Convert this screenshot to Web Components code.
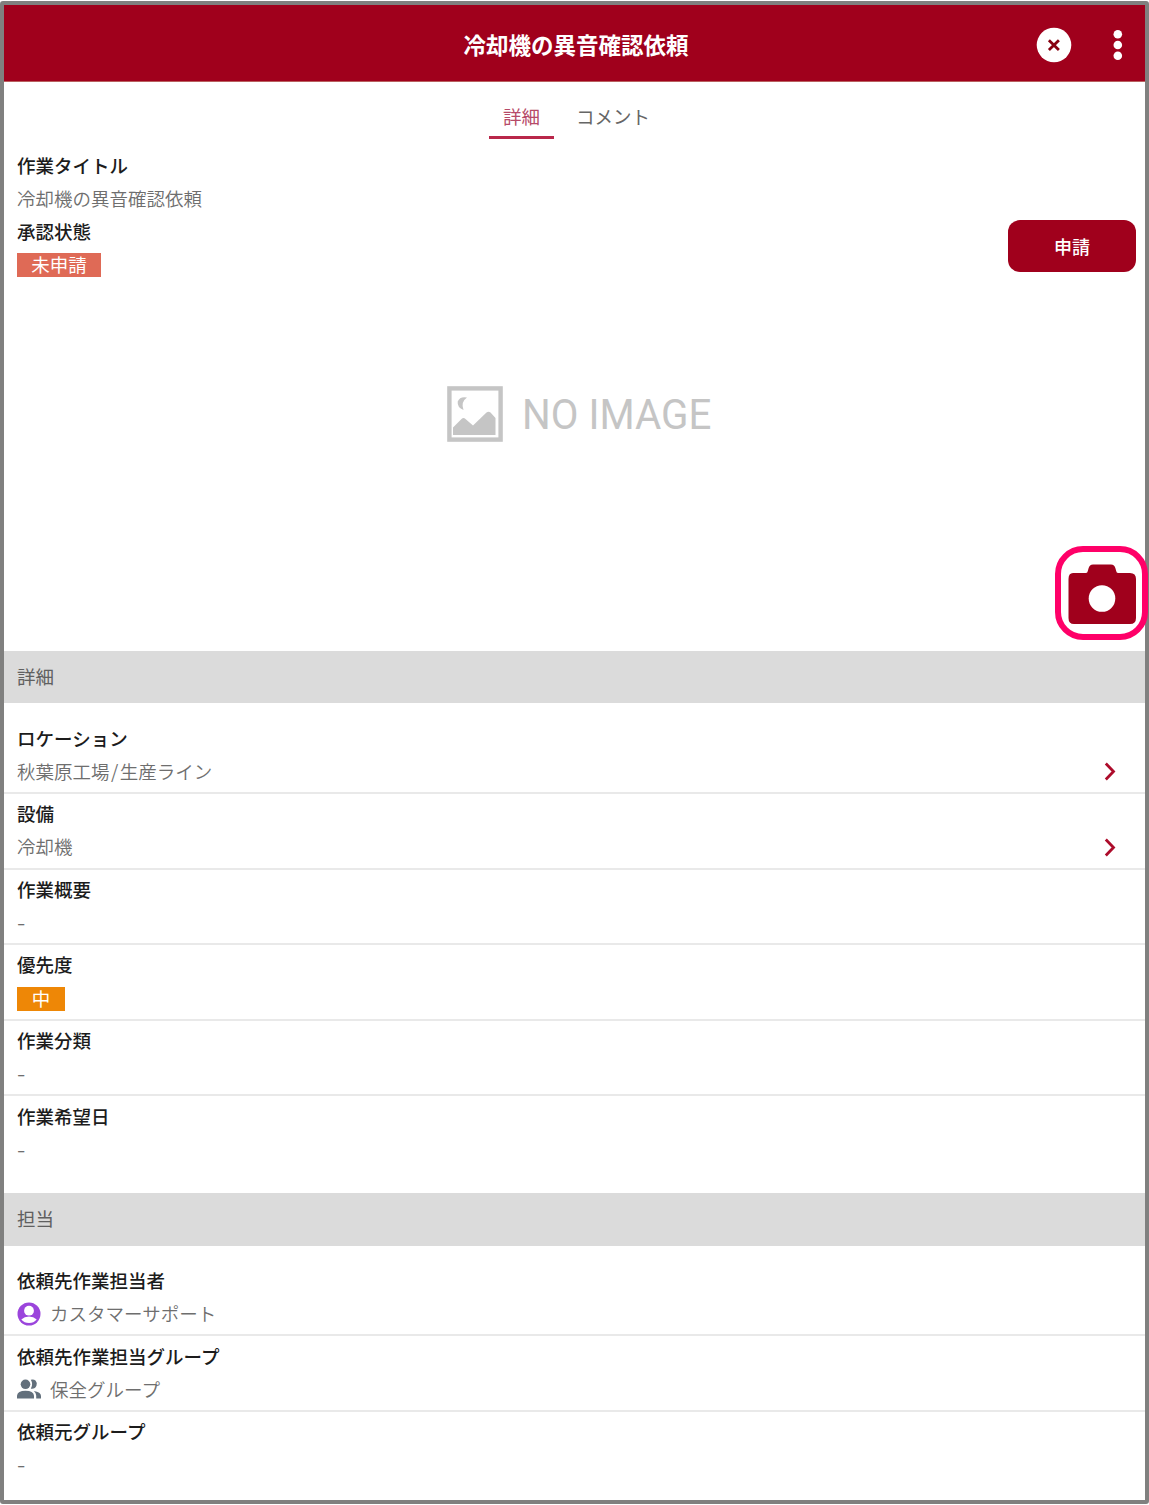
<!DOCTYPE html>
<html lang="ja">
<head>
<meta charset="utf-8">
<title>冷却機の異音確認依頼</title>
<style>
  html,
  body {
    margin: 0;
    height: 100%;
    overflow: hidden;
    background: #fff;
  }

  body {
    --brand: #a0001c;
    --frame: #80807f;
    font-family: "Noto Sans CJK JP", sans-serif;
    font-size: 18.5px;
    color: #1c1c1c;
  }
</style>
</head>
<body>
  <work-order-page>
    <app-header slot="header">冷却機の異音確認依頼</app-header>
    <tab-bar>
      <tab-item active>詳細</tab-item>
      <tab-item>コメント</tab-item>
    </tab-bar>
    <work-summary>
      <field-label>作業タイトル</field-label>
      <field-value>冷却機の異音確認依頼</field-value>
      <field-label>承認状態</field-label>
      <field-value><status-badge style="--badge-color: #df6a56; --badge-width: 84px">未申請</status-badge></field-value>
      <action-button slot="action">申請</action-button>
    </work-summary>
    <photo-area>NO IMAGE</photo-area>
    <detail-section>
      <span slot="title">詳細</span>
      <detail-row label="ロケーション" link>秋葉原工場<span style="margin: 0 1.5px">/</span>生産ライン</detail-row>
      <detail-row label="設備" link>冷却機</detail-row>
      <detail-row label="作業概要"><empty-value>-</empty-value></detail-row>
      <detail-row label="優先度"><status-badge style="--badge-color: #ee8706; --badge-width: 48px">中</status-badge></detail-row>
      <detail-row label="作業分類"><empty-value>-</empty-value></detail-row>
      <detail-row label="作業希望日" last><empty-value>-</empty-value></detail-row>
    </detail-section>
    <detail-section>
      <span slot="title">担当</span>
      <detail-row label="依頼先作業担当者"><user-icon></user-icon>カスタマーサポート</detail-row>
      <detail-row label="依頼先作業担当グループ"><group-icon></group-icon>保全グループ</detail-row>
      <detail-row label="依頼元グループ" last><empty-value>-</empty-value></detail-row>
    </detail-section>
  </work-order-page>

<script>
// Attaches an open shadow root filled from the given markup
class BaseElement extends HTMLElement {
  constructor() {
    super();
    const template = document.createElement("template");
    template.innerHTML = this.constructor.markup;
    this.attachShadow({ mode: "open" });
    this.shadowRoot.appendChild(template.content.cloneNode(true));
  }
}

class WorkOrderPage extends BaseElement {
  static markup = /* HTML */ `
    <style>
      :host {
        display: block;
        box-sizing: border-box;
        height: 1503px;
        margin-top: 1px;
        border: 4px solid var(--frame);
        border-radius: 3px;
        background: #fff;
      }
    </style>
    <slot name="header"></slot>
    <slot></slot>
  `;
}

class AppHeader extends BaseElement {
  static markup = /* HTML */ `
    <style>
      :host {
        display: grid;
        grid-template-columns: 1fr auto 1fr;
        align-items: center;
        box-sizing: border-box;
        height: 77px;
        border-bottom: 1px solid #b9605f;
        background: var(--brand);
        color: #fff;
      }
      h1 {
        grid-column: 2;
        margin: 0 0 0 3px;
        padding-top: 2px;
        font-size: 22.5px;
        line-height: 32px;
        font-weight: 700;
      }
      .actions {
        display: flex;
        justify-content: flex-end;
        align-items: center;
        gap: 41px;
        padding: 4px 22px 0 0;
      }
      svg {
        display: block;
      }
    </style>
    <h1><slot></slot></h1>
    <div class="actions">
      <svg width="36" height="36" viewBox="0 0 36 36">
        <circle cx="18" cy="18" r="17.3" fill="#fff" />
        <path d="M12.9 13.2l10 9.8M22.9 13.2l-10 9.8" stroke="#87000f" stroke-width="2.8" />
      </svg>
      <svg width="10" height="32" viewBox="0 0 10 32" fill="#fff">
        <circle cx="4.800" cy="5.2" r="4.3" />
        <circle cx="4.800" cy="16" r="4.3" />
        <circle cx="4.800" cy="26.7" r="4.3" />
      </svg>
    </div>
  `;
}

class TabBar extends BaseElement {
  static markup = /* HTML */ `
    <style>
      :host {
        display: flex;
        justify-content: center;
        gap: 8px;
        height: 67.5px;
        padding-left: 4px;
      }
    </style>
    <slot></slot>
  `;
}

class TabItem extends BaseElement {
  static markup = /* HTML */ `
    <style>
      :host {
        box-sizing: border-box;
        height: 57px;
        padding: 18px 14px 0;
        border-bottom: 3px solid transparent;
        line-height: 32px;
        color: #666;
      }
      :host([active]) {
        border-color: #b9274a;
        color: #b64a68;
      }
    </style>
    <slot></slot>
  `;
}

class FieldLabel extends BaseElement {
  static markup = /* HTML */ `
    <style>
      :host {
        display: block;
        height: 33px;
        line-height: 31.4px;
        font-weight: 500;
      }
    </style>
    <slot></slot>
  `;
}

class FieldValue extends BaseElement {
  static markup = /* HTML */ `
    <style>
      :host {
        display: flex;
        align-items: center;
        height: 33px;
        line-height: 31.4px;
        font-weight: 350;
        color: #6e6e6e;
      }
      slot {
        display: flex;
        align-items: center;
        height: 31.4px;
        margin-bottom: 1.6px;
      }
    </style>
    <slot></slot>
  `;
}

class EmptyValue extends BaseElement {
  static markup = /* HTML */ `
    <style>
      :host {
        display: block;
        transform: scaleX(1.3);
        transform-origin: left;
        font-weight: 400;
      }
    </style>
    <slot></slot>
  `;
}

class StatusBadge extends BaseElement {
  static markup = /* HTML */ `
    <style>
      :host {
        display: block;
        width: var(--badge-width);
        height: 24px;
        margin-top: 1.6px;
        line-height: 22px;
        text-align: center;
        background: var(--badge-color);
        color: #fff;
        font-weight: 400;
      }
    </style>
    <slot></slot>
  `;
}

class ActionButton extends BaseElement {
  static markup = /* HTML */ `
    <style>
      :host {
        display: block;
        flex: none;
      }
      button {
        display: block;
        width: 128px;
        height: 52px;
        padding: 0;
        border: 0;
        border-radius: 12px;
        background: var(--brand);
        color: #fff;
        font: 500 18px/51px "Noto Sans CJK JP", sans-serif;
      }
    </style>
    <button><slot></slot></button>
  `;
}

class WorkSummary extends BaseElement {
  static markup = /* HTML */ `
    <style>
      :host {
        display: flex;
        justify-content: space-between;
        align-items: flex-end;
        height: 132px;
        padding: 0 9px 0 13px;
      }
      .action {
        padding-bottom: 9.5px;
      }
    </style>
    <div><slot></slot></div>
    <div class="action"><slot name="action"></slot></div>
  `;
}

class PhotoArea extends BaseElement {
  static markup = /* HTML */ `
    <style>
      :host {
        position: relative;
        display: flex;
        align-items: flex-start;
        justify-content: center;
        gap: 19px;
        box-sizing: border-box;
        height: 369.5px;
        padding: 104.5px 0 0 8px;
        color: #c5c5c5;
      }
      .text {
        width: 188px;
        font: 400 43px/56px Roboto, sans-serif;
        white-space: nowrap;
        transform: scaleX(0.937);
        transform-origin: left;
      }
      .camera {
        position: absolute;
        right: -3px;
        bottom: 11px;
        display: flex;
        align-items: center;
        justify-content: center;
        box-sizing: border-box;
        width: 93px;
        height: 94px;
        padding-top: 1px;
        border: 6px solid #ff0068;
        border-radius: 28px;
      }
    </style>
    <svg width="56" height="56" viewBox="0 0 56 56">
      <rect x="2.4" y="2.4" width="51.2" height="51.2" fill="none" stroke="currentColor" stroke-width="4.4" />
      <path d="M6 49V41.5L14.500 33Q16.500 31.200 18.500 33L26 39.500L39.500 26.500Q41.500 24.800 43.500 26.500L48.500 32V49Z" fill="currentColor" />
      <path d="M20 11.500Q13 10 10.700 15.500Q10 21.500 16.500 24Q13.500 16 20 11.500Z" fill="currentColor" />
    </svg>
    <span class="text"><slot></slot></span>
    <div class="camera">
      <svg width="68" height="60" viewBox="0 0 68 60">
        <path d="M5 9H18Q19.500 9 19.800 7L20.500 4.500Q21.500 0.500 25 0.500H43Q46.500 0.500 47.500 4.500L48.200 7Q48.500 9 50 9H62Q68 9 68 15V54Q68 60 62 60H6Q0.500 60 0.500 54V15Q0.500 9 5 9Z" fill="#a0001c" />
        <circle cx="34" cy="34.500" r="13.300" fill="#fff" />
      </svg>
    </div>
  `;
}

class DetailSection extends BaseElement {
  static markup = /* HTML */ `
    <style>
      :host {
        display: block;
        padding-bottom: 21.4px;
      }
      h2 {
        margin: 0;
        height: 52.4px;
        padding-left: 13px;
        background: #dbdbdb;
        font-size: 18.5px;
        line-height: 51px;
        font-weight: 400;
        color: #606060;
      }
      .rows {
        padding-top: 15px;
      }
    </style>
    <h2><slot name="title"></slot></h2>
    <div class="rows"><slot></slot></div>
  `;
}

class DetailRow extends BaseElement {
  static markup = /* HTML */ `
    <style>
      :host {
        display: block;
        box-sizing: border-box;
        height: 75.6px;
        padding: 4.3px 28px 0 13px;
        border-bottom: 2px solid #e9e9e9;
      }
      :host([last]) {
        border-bottom-color: transparent;
      }
      .line {
        display: flex;
        justify-content: space-between;
        align-items: center;
      }
      svg {
        display: none;
      }
      :host([link]) svg {
        display: block;
      }
    </style>
    <field-label></field-label>
    <div class="line">
      <field-value><slot></slot></field-value>
      <svg width="14" height="20" viewBox="0 0 14 20">
        <path d="M2.800 1.500l7.700 8-7.700 8" fill="none" stroke="#ad0c2b" stroke-width="2.800" />
      </svg>
    </div>
  `;

  connectedCallback() {
    this.shadowRoot.querySelector("field-label").textContent = this.getAttribute("label");
  }
}

class UserIcon extends BaseElement {
  static markup = /* HTML */ `
    <style>
      :host {
        display: block;
        width: 24px;
        height: 24px;
        margin-right: 9px;
      }
      svg {
        display: block;
      }
    </style>
    <svg width="24" height="24" viewBox="0 0 24 24">
      <circle cx="12" cy="12" r="11.500" fill="#9b45dc" />
      <circle cx="12" cy="8.700" r="4.900" fill="#fff" />
      <path d="M4.300 17.500Q7.500 14.600 12 14.600T19.700 17.500Q16.700 21 12 21T4.300 17.500Z" fill="#fff" />
    </svg>
  `;
}

class GroupIcon extends BaseElement {
  static markup = /* HTML */ `
    <style>
      :host {
        display: block;
        width: 24px;
        height: 24px;
        margin-right: 9px;
      }
      svg {
        display: block;
      }
    </style>
    <svg width="24" height="24" viewBox="0 0 24 24" fill="#63707c">
      <circle cx="8.500" cy="7.300" r="4.800" />
      <path d="M0 21.500V18.500Q0.500 13.800 8.500 13.800T17 18.500V21.500Z" />
      <path d="M13.800 2.800Q16.500 1.800 18.500 3.600Q20.300 5.500 19.500 8.500Q18 12.500 13.800 11.700Q16.500 7.300 13.800 2.800Z" />
      <path d="M16.800 14Q24 15 24 19V21.500H19.200V18.500Q19.200 16 16.800 14Z" />
    </svg>
  `;
}

customElements.define("work-order-page", WorkOrderPage);
customElements.define("app-header", AppHeader);
customElements.define("tab-bar", TabBar);
customElements.define("tab-item", TabItem);
customElements.define("field-label", FieldLabel);
customElements.define("field-value", FieldValue);
customElements.define("empty-value", EmptyValue);
customElements.define("status-badge", StatusBadge);
customElements.define("action-button", ActionButton);
customElements.define("work-summary", WorkSummary);
customElements.define("photo-area", PhotoArea);
customElements.define("detail-section", DetailSection);
customElements.define("detail-row", DetailRow);
customElements.define("user-icon", UserIcon);
customElements.define("group-icon", GroupIcon);
</script>
</body>
</html>
